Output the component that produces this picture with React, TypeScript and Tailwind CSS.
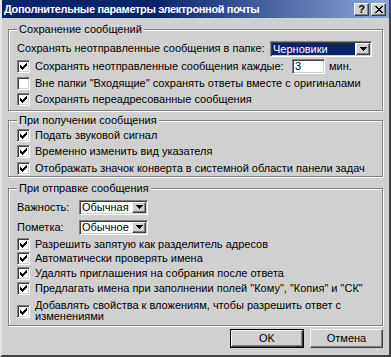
import React from "react";

const sunken =
  "border border-t-[#808080] border-l-[#808080] border-r-white border-b-white shadow-[inset_1px_1px_0_#404040,inset_-1px_-1px_0_#d0d0d0]";
const raised =
  "border border-t-[#f4f4f4] border-l-[#f4f4f4] border-r-[#404040] border-b-[#404040] shadow-[inset_-1px_-1px_0_#808080]";

function Check({ checked = true }: { checked?: boolean }) {
  return (
    <span className={`w-[13px] h-[13px] shrink-0 bg-white flex items-center justify-center ${sunken}`}>
      {checked && (
        <svg width="7" height="7" viewBox="0 0 7 7" shapeRendering="crispEdges">
          <rect x="6" y="0" width="1" height="1" fill="#000" />
          <rect x="5" y="1" width="2" height="1" fill="#000" />
          <rect x="0" y="2" width="1" height="1" fill="#000" />
          <rect x="4" y="2" width="3" height="1" fill="#000" />
          <rect x="0" y="3" width="2" height="1" fill="#000" />
          <rect x="3" y="3" width="3" height="1" fill="#000" />
          <rect x="0" y="4" width="5" height="1" fill="#000" />
          <rect x="1" y="5" width="3" height="1" fill="#000" />
          <rect x="2" y="6" width="1" height="1" fill="#000" />
        </svg>
      )}
    </span>
  );
}

function Arrow() {
  return (
    <span className={`w-[14px] h-full shrink-0 bg-[#d0d0d0] flex items-center justify-center ${raised}`}>
      <svg width="7" height="4" viewBox="0 0 7 4" shapeRendering="crispEdges">
        <path d="M0 0h7v1H6v1H5v1H4v1H3V3H2V2H1V1H0z" fill="#000" />
      </svg>
    </span>
  );
}

function Row({ text, checked = true, h }: { text: string; checked?: boolean; h: string }) {
  return (
    <div className={`flex items-center gap-[5px] ${h}`}>
      <Check checked={checked} />
      <span>{text}</span>
    </div>
  );
}

function Group({ title, children, cls }: { title: string; children: React.ReactNode; cls: string }) {
  return (
    <fieldset
      className={`mx-[6px] px-[8px] border border-[#808080] shadow-[inset_1px_1px_0_#fff,1px_1px_0_#fff] ${cls}`}
    >
      <legend className="px-[2px] leading-[13px] bg-[#d0d0d0]">{title}</legend>
      {children}
    </fieldset>
  );
}

export default function App() {
  return (
    <div className="w-[391px] h-[357px] bg-[#d0d0d0] font-['Liberation_Sans',Arial,sans-serif] text-[11px] text-black leading-[13px] overflow-hidden">
      <div className="w-full h-full flex flex-col border-l-2 border-l-[#e6e6e6] border-r-2 border-r-[#404040] border-b-2 border-b-[#404040]">
        <div className="h-[18px] shrink-0 flex items-center bg-[linear-gradient(to_right,#0a246a_0%,#0a246a_40%,#8aa8d8_100%)] pl-[2px] pr-[3px]">
          <span className="text-white font-bold text-[11px] leading-[16px] tracking-[-0.35px]">
            Дополнительные параметры электронной почты
          </span>
          <div className="ml-auto flex items-center gap-[2px]">
            <span className={`w-[15px] h-[13px] bg-[#d0d0d0] flex items-center justify-center font-bold text-[11px] leading-none ${raised}`}>
              ?
            </span>
            <span className={`w-[15px] h-[13px] bg-[#d0d0d0] flex items-center justify-center ${raised}`}>
              <svg width="8" height="7" viewBox="0 0 8 7" shapeRendering="crispEdges">
                <path d="M0 0h2v1h1v1h2V1h1V0h2v1H7v1H6v1H5v1h1v1h1v1h1v1H6V6H5V5H3v1H2v1H0V6h1V5h1V4h1V3H2V2H1V1H0z" fill="#000" />
              </svg>
            </span>
          </div>
        </div>

        <Group title="Сохранение сообщений" cls="mt-[5px] pb-[3px]">
          <div className="pt-[4px]">
            <div className="flex items-center h-[17px]">
              <span className="w-[253px] shrink-0">Сохранять неотправленные сообщения в папке:</span>
              <div className={`w-[102px] h-[16px] bg-white flex items-stretch p-[1px] ${sunken}`}>
                <span className="flex-1 bg-[#0a246a] text-white leading-[12px] pl-[1px] mr-[1px]">Черновики</span>
                <Arrow />
              </div>
            </div>
            <div className="flex items-center h-[18px]">
              <Check />
              <span className="w-[262px] shrink-0 pl-[5px]">Сохранять неотправленные сообщения каждые:</span>
              <span className={`w-[33px] h-[15px] bg-white pl-[2px] leading-[12px] ${sunken}`}>3</span>
              <span className="ml-[4px]">мин.</span>
            </div>
            <Row h="h-[16px]" checked={false} text={'Вне папки "Входящие" сохранять ответы вместе с оригиналами'} />
            <Row h="h-[16px]" text="Сохранять переадресованные сообщения" />
          </div>
        </Group>

        <Group title="При получении сообщения" cls="mt-[3px]">
          <Row h="h-[16px]" text="Подать звуковой сигнал" />
          <Row h="h-[17px]" text="Временно изменить вид указателя" />
          <Row h="h-[16px]" text="Отображать значок конверта в системной области панели задач" />
        </Group>

        <Group title="При отправке сообщения" cls="mt-[5px] pb-[3px]">
          <div className="pt-[4px] flex flex-col">
            <div className="flex items-center h-[16px]">
              <span className="w-[62px] shrink-0">Важность:</span>
              <div className={`w-[69px] h-[15px] bg-white flex items-stretch p-[1px] ${sunken}`}>
                <span className="flex-1 leading-[11px] pl-[1px]">Обычная</span>
                <Arrow />
              </div>
            </div>
            <div className="flex items-center h-[16px] mt-[4px]">
              <span className="w-[62px] shrink-0">Пометка:</span>
              <div className={`w-[69px] h-[15px] bg-white flex items-stretch p-[1px] ${sunken}`}>
                <span className="flex-1 leading-[11px] pl-[1px]">Обычное</span>
                <Arrow />
              </div>
            </div>
            <div className="mt-[2px]">
              <Row h="h-[14px]" text="Разрешить запятую как разделитель адресов" />
              <Row h="h-[15px]" text="Автоматически проверять имена" />
              <Row h="h-[15px]" text="Удалять приглашения на собрания после ответа" />
              <Row h="h-[15px]" text={'Предлагать имена при заполнении полей "Кому", "Копия" и "СК"'} />
              <div className="flex items-center gap-[5px] mt-[4px]">
                <Check />
                <span className="leading-[11px]">
                  Добавлять свойства к вложениям, чтобы разрешить ответ с
                  <br />
                  изменениями
                </span>
              </div>
            </div>
          </div>
        </Group>

        <div className="flex justify-end gap-[6px] mt-[3px] pr-[6px]">
          <div className="border border-black">
            <div className={`w-[72px] h-[17px] flex items-center justify-center ${raised}`}>OK</div>
          </div>
          <div className={`w-[73px] h-[19px] flex items-center justify-center ${raised}`}>Отмена</div>
        </div>
      </div>
    </div>
  );
}
